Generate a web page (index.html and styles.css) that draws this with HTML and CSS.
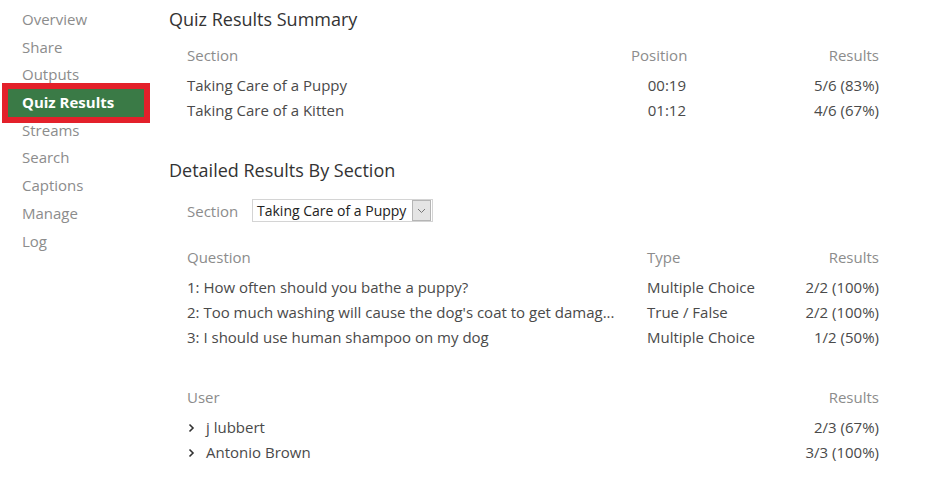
FILE: index.html
```html
<!DOCTYPE html>
<html lang="en">
<head>
    <meta charset="UTF-8">
    <meta name="viewport" content="width=device-width, initial-scale=1.0">
    <title>Quiz Results</title>
    <link rel="stylesheet" href="styles.css">
</head>
<body>
    <div class="page">
        <!-- left menu -->
        <ul class="menu">
            <li>Overview</li>
            <li>Share</li>
            <li>Outputs</li>
            <li class="active">Quiz Results</li>
            <li>Streams</li>
            <li>Search</li>
            <li>Captions</li>
            <li>Manage</li>
            <li>Log</li>
        </ul>

        <div class="content">
            <h2 class="title">Quiz Results Summary</h2>
            <div class="grid summary">
                <div class="head">Section</div>
                <div class="head right">Position</div>
                <div class="head right">Results</div>

                <div>Taking Care of a Puppy</div>
                <div class="right">00:19</div>
                <div class="right">5/6 (83%)</div>

                <div>Taking Care of a Kitten</div>
                <div class="right">01:12</div>
                <div class="right">4/6 (67%)</div>
            </div>

            <h2 class="title detail-title">Detailed Results By Section</h2>
            <div class="picker">
                <span class="label">Section</span>
                <div class="select">
                    <span class="select-text">Taking Care of a Puppy</span>
                    <span class="select-btn">
                        <svg width="9" height="6" viewBox="0 0 9 6"><path d="M1 1l3.5 3.5L8 1" fill="none" stroke="#777" stroke-width="1"/></svg>
                    </span>
                </div>
            </div>

            <div class="grid questions">
                <div class="head">Question</div>
                <div class="head">Type</div>
                <div class="head right">Results</div>

                <div>1: How often should you bathe a puppy?</div>
                <div>Multiple Choice</div>
                <div class="right">2/2 (100%)</div>

                <div>2: Too much washing will cause the dog's coat to get damag...</div>
                <div>True / False</div>
                <div class="right">2/2 (100%)</div>

                <div>3: I should use human shampoo on my dog</div>
                <div>Multiple Choice</div>
                <div class="right">1/2 (50%)</div>
            </div>

            <div class="grid users">
                <div class="head">User</div>
                <div class="head right">Results</div>

                <div class="user"><svg class="chev" width="7" height="10" viewBox="0 0 7 10"><path d="M1.5 1.5L5 5 1.5 8.5" fill="none" stroke="#333" stroke-width="1.6"/></svg>j lubbert</div>
                <div class="right">2/3 (67%)</div>

                <div class="user"><svg class="chev" width="7" height="10" viewBox="0 0 7 10"><path d="M1.5 1.5L5 5 1.5 8.5" fill="none" stroke="#333" stroke-width="1.6"/></svg>Antonio Brown</div>
                <div class="right">3/3 (100%)</div>
            </div>
        </div>
    </div>
</body>
</html>
```

FILE: styles.css
```css
body {
    margin: 0;
    padding: 0;
    background-color: #fff;
    font-family: "Open Sans", "Noto Sans", sans-serif;
    font-size: 15px;
    color: #4a4a4a;
}
.page {
    display: flex;
}
.menu {
    list-style: none;
    margin: 0;
    padding: 6px 0 0 8px;
    width: 161px;
    flex: none;
}
.menu li {
    height: 27.7px;
    line-height: 27.7px;
    padding-left: 14px;
    width: 122px;
    color: #8c8c8c;
    font-size: 15px;
}
.menu li.active {
    background-color: #3a7a46;
    outline: 6px solid #e3202a;
    color: #fff;
    font-weight: bold;
}
.content {
    width: 710px;
}
.title {
    margin: 6px 0 0 0;
    font-size: 18px;
    font-weight: normal;
    line-height: 26px;
    color: #333;
}
.detail-title {
    margin-top: 34px;
}
.grid {
    display: grid;
    margin-left: 18px;
    line-height: 25px;
    white-space: nowrap;
}
.grid .head {
    color: #8c8c8c;
    margin-bottom: 5px;
}
.right {
    text-align: right;
}
.summary {
    margin-top: 11px;
    grid-template-columns: 444px 55px 193px;
}
.questions {
    margin-top: 22px;
    grid-template-columns: 460px 1fr 120px;
}
.users {
    margin-top: 35px;
    grid-template-columns: 1fr 200px;
}
.user {
    display: flex;
    align-items: center;
}
.chev {
    margin: 0 11px 0 1px;
}
.picker {
    display: flex;
    align-items: center;
    margin: 15px 0 0 18px;
    height: 25px;
}
.label {
    color: #8c8c8c;
    width: 65px;
}
.select {
    display: flex;
    align-items: center;
    height: 21px;
    border: 1px solid #d4d4d4;
    padding-left: 4px;
    color: #222;
    font-size: 14px;
}
.select-text {
    padding-right: 6px;
}
.select-btn {
    display: flex;
    align-items: center;
    justify-content: center;
    width: 17px;
    height: 19px;
    margin-right: 1px;
    background-color: #e4e4e4;
    border: 1px solid #b5b5b5;
}
```
